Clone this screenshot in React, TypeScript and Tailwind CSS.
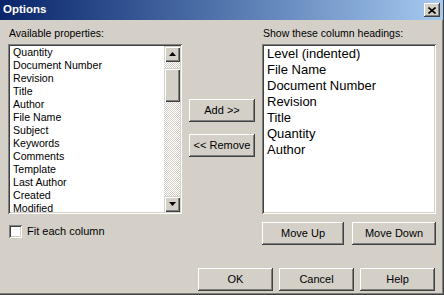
import React from 'react';

const raised =
  'bg-[#d4d0c8] shadow-[inset_-1px_-1px_#404040,inset_1px_1px_#ffffff,inset_-2px_-2px_#808080]';
const scrollBtn =
  'bg-[#d4d0c8] shadow-[inset_1px_1px_#d4d0c8,inset_2px_2px_#ffffff,inset_-1px_-1px_#404040,inset_-2px_-2px_#808080]';
const sunken =
  'bg-white p-[2px] shadow-[inset_1px_1px_#808080,inset_-1px_-1px_#ffffff,inset_2px_2px_#404040,inset_-2px_-2px_#d4d0c8]';

const available = [
  'Quantity',
  'Document Number',
  'Revision',
  'Title',
  'Author',
  'File Name',
  'Subject',
  'Keywords',
  'Comments',
  'Template',
  'Last Author',
  'Created',
  'Modified',
];

const shown = ['Level (indented)', 'File Name', 'Document Number', 'Revision', 'Title', 'Quantity', 'Author'];

const Btn: React.FC<{ label: string; w: string }> = ({ label, w }) => (
  <button className={`${raised} ${w} h-[23px] flex items-center justify-center text-[11px] leading-none text-black`}>
    {label}
  </button>
);

const Arrow: React.FC<{ down?: boolean }> = ({ down }) => (
  <div className={`${scrollBtn} w-[16px] h-[16px] flex items-center justify-center shrink-0`}>
    <svg width="7" height="4" viewBox="0 0 7 4">
      <polygon points={down ? '0,0 7,0 3.5,4' : '0,4 7,4 3.5,0'} fill="#000" />
    </svg>
  </div>
);

export default function App() {
  return (
    <div className="w-[444px] h-[295px] bg-[#d4d0c8] flex flex-col overflow-hidden font-['Liberation_Sans',Arial,sans-serif] text-black shadow-[inset_-1px_-1px_#404040,inset_-2px_-2px_#808080]">
      {/* title bar */}
      <div className="h-[20px] mr-[1px] flex items-center justify-between pl-[3px] pr-[3px] bg-gradient-to-r from-[#0a246a] to-[#a6caf0]">
        <span className="text-white font-bold text-[11.5px] leading-none">Options</span>
        <div className={`${raised} w-[16px] h-[14px] flex items-center justify-center`}>
          <svg width="8" height="7" viewBox="0 0 8 7">
            <path d="M0.5 0.5 L7.5 6.5 M7.5 0.5 L0.5 6.5" stroke="#000" strokeWidth="1.6" />
          </svg>
        </div>
      </div>

      <div className="flex flex-col pl-[8px] pt-[7px]">
        <div className="flex h-[187px]">
          {/* available */}
          <div className="w-[174px] flex flex-col">
            <div className="h-[17px] pl-[1px] text-[10.5px] leading-[13px]">Available properties:</div>
            <div className={`${sunken} h-[170px] flex`}>
              <div className="flex-1 overflow-hidden pl-[3px] text-[10.6px] leading-[13px]">
                {available.map((a) => (
                  <div key={a} className="h-[13px] whitespace-nowrap">
                    {a}
                  </div>
                ))}
              </div>
              <div className="w-[16px] flex flex-col bg-[repeating-conic-gradient(#ffffff_0%_25%,#d4d0c8_0%_50%)] bg-[length:2px_2px]">
                <Arrow />
                <div className={`${scrollBtn} mt-[6px] h-[34px]`} />
                <div className="flex-1" />
                <Arrow down />
              </div>
            </div>
          </div>

          {/* middle buttons */}
          <div className="w-[80px] flex flex-col pl-[7px] pt-[72px] gap-[12px]">
            <Btn label="Add >>" w="w-[66px]" />
            <Btn label="<< Remove" w="w-[66px]" />
          </div>

          {/* shown */}
          <div className="w-[174px] flex flex-col">
            <div className="h-[17px] pl-[1px] text-[10.5px] leading-[13px]">Show these column headings:</div>
            <div className={`${sunken} h-[170px] pl-[5px] text-[13px] leading-[16px]`}>
              {shown.map((s) => (
                <div key={s} className="h-[16px] whitespace-nowrap">
                  {s}
                </div>
              ))}
            </div>
          </div>
        </div>

        <div className="mt-[8px] flex h-[23px]">
          <div className="w-[254px] flex items-start pt-[3px] pl-[1px]">
            <div className={`${sunken} w-[13px] h-[13px]`} />
            <span className="ml-[5px] text-[11px] leading-[13px]">Fit each column</span>
          </div>
          <Btn label="Move Up" w="w-[82px]" />
          <div className="w-[8px]" />
          <Btn label="Move Down" w="w-[84px]" />
        </div>

        <div className="mt-[23px] flex justify-end pr-[9px] gap-[6px]">
          <Btn label="OK" w="w-[75px]" />
          <Btn label="Cancel" w="w-[75px]" />
          <Btn label="Help" w="w-[75px]" />
        </div>
      </div>
    </div>
  );
}
